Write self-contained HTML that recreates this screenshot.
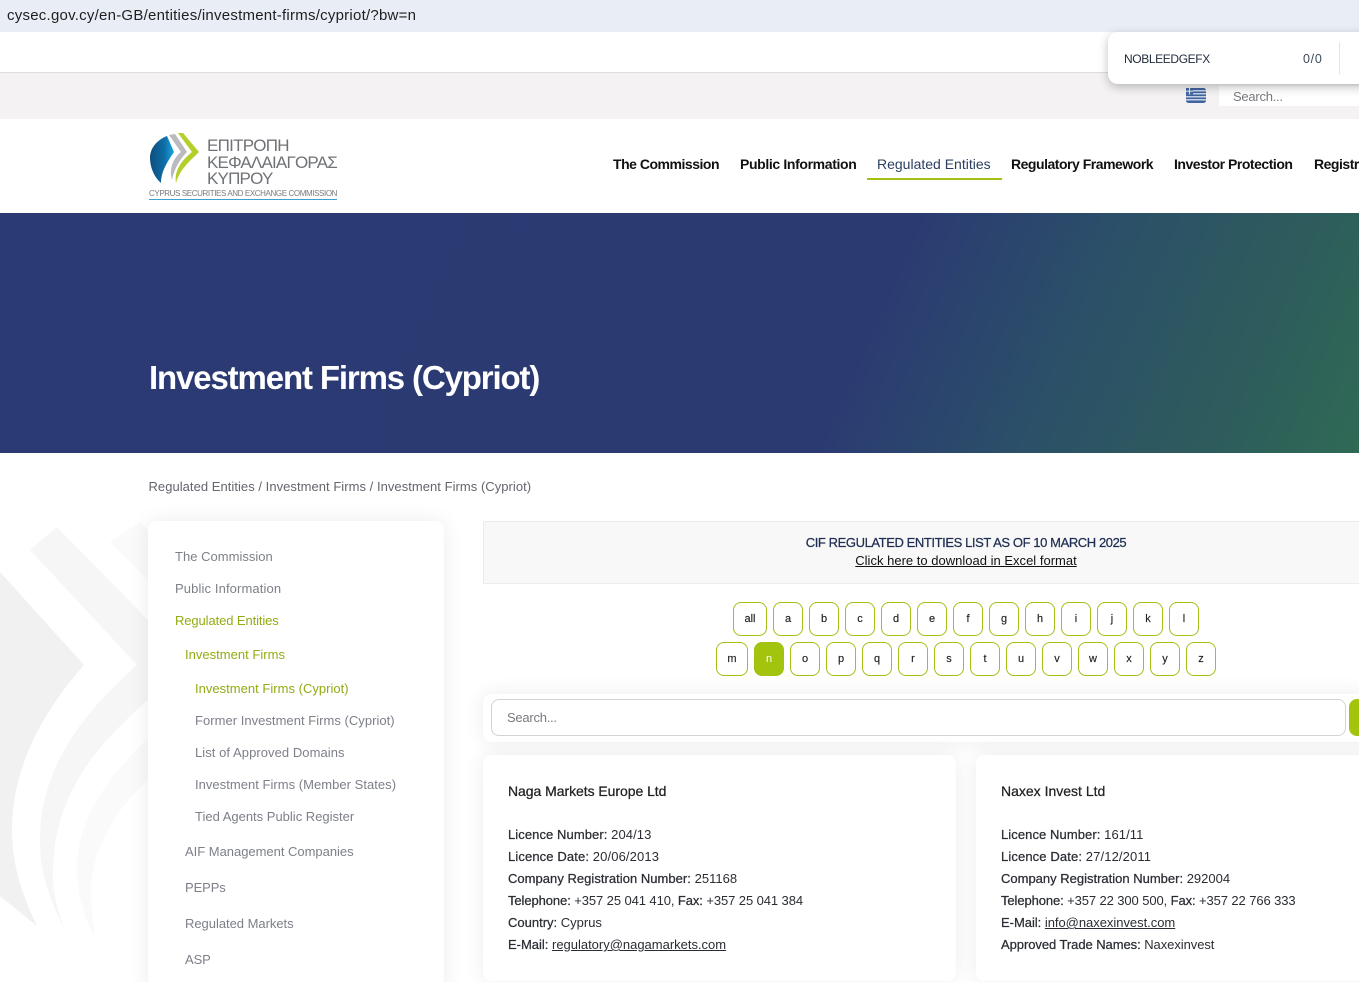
<!DOCTYPE html>
<html lang="en"><head><meta charset="utf-8"><title>Investment Firms (Cypriot)</title>
<style>
html,body{margin:0;padding:0;background:#fff}
#p{position:relative;width:1359px;height:982px;overflow:hidden;background:#fff;font-family:"Liberation Sans","Noto Sans CJK SC",sans-serif;color:#222}
#p div,#p a,#p svg{position:absolute}
.t{white-space:nowrap;line-height:16px;height:16px}
.s{font-size:13px;color:#7d8089;letter-spacing:.02px}
.g{color:#93ab12}
.n{font-size:14px;font-weight:bold;color:#111;letter-spacing:-.48px}
.c{font-size:13px;color:#2a2d33;letter-spacing:0}
.c b{font-weight:normal;-webkit-text-stroke:.25px #2a2d33}
.c u{text-decoration:underline}
.k{box-sizing:border-box;height:34px;width:30px;border:1px solid #a3c015;border-radius:8px;background:#fff;font-size:11px;line-height:32px;text-align:center;color:#222;-webkit-text-stroke:.15px #222}
.card{background:#fff;border-radius:8px;box-shadow:0 0 20px rgba(0,0,0,.08)}
</style></head><body><div id="p">
<div style="left:0;top:0;width:1359px;height:32px;background:#e9eef6"></div>
<div class="t" style="left:7px;top:8px;font-size:15px;color:#1f1f1f;letter-spacing:.24px">cysec.gov.cy/en-GB/entities/investment-firms/cypriot/?bw=n</div>
<div style="left:0;top:72px;width:1359px;height:47px;background:#f4f2f2;border-top:1px solid #dedcdc;box-sizing:border-box"></div>
<svg style="left:1186px;top:88px" width="20" height="15" viewBox="0 0 20 15"><rect width="20" height="15" rx="2.5" fill="#3f64a0"/><g fill="#e8edf5"><rect y="2.2" width="20" height="1.2"/><rect y="5.2" width="20" height="1.2"/><rect y="8.2" width="20" height="1.2"/><rect y="11.2" width="20" height="1.2"/></g><rect width="7" height="6.4" fill="#3f64a0"/><path d="M3.5 0v6.4M0 3.2h7" stroke="#dfe6f0" stroke-width="1.2"/></svg>
<div style="left:1219px;top:86px;width:140px;height:20px;background:#fff"></div>
<div class="t" style="left:1233px;top:89px;font-size:13px;color:#77797f;letter-spacing:-.25px">Search...</div>
<div style="left:1108px;top:32px;width:270px;height:52px;background:#fff;border-radius:10px;box-shadow:0 3px 10px rgba(0,0,0,.25)"></div>
<div class="t" style="left:1124px;top:51px;font-size:12px;color:#1f2a3a;letter-spacing:-.38px">NOBLEEDGEFX</div>
<div class="t" style="left:1303px;top:51px;font-size:12.5px;color:#3c4a5c;letter-spacing:.7px">0/0</div>
<div style="left:1339px;top:42px;width:1px;height:32px;background:#dfe4ec"></div>

<div style="left:0;top:119px;width:1359px;height:94px;background:#fff"></div>
<svg style="left:148px;top:131px" width="56" height="58" viewBox="0 0 56 58">
<defs><linearGradient id="lb" x1="0" y1="0" x2="1" y2="0"><stop offset="0" stop-color="#0f4d7c"/><stop offset=".6" stop-color="#0d6ea8"/><stop offset="1" stop-color="#1ea6e0"/></linearGradient></defs>
<path d="M19 5 L26 21 C20 30 13 40 13 52 C6 46 2 36 2 27 C2 17 9 9 19 5Z" fill="url(#lb)"/>
<path d="M21 4 L27 3 L39 21 C32 28 26 38 24 49 C21 40 24 28 33 21Z" fill="#b9bbbe"/>
<path d="M30 2 L35 2 L51 21 C42 30 32 38 28 52 C26 40 33 30 44 21Z" fill="#b4cf2a"/>
</svg>
<div class="t" style="left:207px;top:138px;font-size:17px;color:#6f7276;letter-spacing:-.75px">ΕΠΙΤΡΟΠΗ</div>
<div class="t" style="left:207px;top:155px;font-size:17px;color:#6f7276;letter-spacing:-.8px">ΚΕΦΑΛΑΙΑΓΟΡΑΣ</div>
<div class="t" style="left:207px;top:171px;font-size:17px;color:#6f7276;letter-spacing:-.8px">ΚΥΠΡΟΥ</div>
<div class="t" style="left:149px;top:186px;font-size:8px;color:#777a7e;letter-spacing:-.39px">CYPRUS SECURITIES AND EXCHANGE COMMISSION</div>
<div style="left:149px;top:199px;width:188px;height:1px;background:#3aa0d0"></div>

<div class="t n" style="left:613px;top:156px">The Commission</div>
<div class="t n" style="left:740px;top:156px;letter-spacing:-.36px">Public Information</div>
<div class="t n" style="left:877px;top:156px;font-weight:normal;color:#2a3f60;letter-spacing:0">Regulated Entities</div>
<div style="left:867px;top:178px;width:135px;height:2px;background:#a3c015"></div>
<div class="t n" style="left:1011px;top:156px">Regulatory Framework</div>
<div class="t n" style="left:1174px;top:156px">Investor Protection</div>
<div class="t n" style="left:1314px;top:156px">Registrar</div>

<div style="left:0;top:213px;width:1359px;height:240px;background:linear-gradient(114deg,#2b3a72 0%,#2b3b72 63%,#2b5068 77%,#2e5c5c 90%,#2f6a55 100%)"></div>
<div class="t" style="left:149px;top:358px;height:40px;line-height:40px;font-size:33px;font-weight:bold;color:#fff;letter-spacing:-1.14px">Investment Firms (Cypriot)</div>

<div class="t" style="left:148.5px;top:479px;font-size:13px;color:#63666d;letter-spacing:.04px">Regulated Entities / Investment Firms / Investment Firms (Cypriot)</div>

<svg style="left:0;top:510px" width="148" height="472" viewBox="0 0 148 472">
<path d="M0 62 L84 155 C40 205 12 260 12 320 C12 355 22 385 37 416 L0 386Z" fill="#f1f1f1"/>
<path d="M30 40 L57 17 L148 110 L148 190 C90 240 53 290 53 365 C53 385 58 400 64 418 C50 390 40 365 40 330 C40 260 80 205 137 155Z" fill="#f6f6f6"/>
<path d="M110 32 L140 12 L148 20 L148 70Z M148 228 C105 270 77 310 77 360 C77 385 85 410 95 428 C93 412 91 395 91 383 C91 340 115 300 148 270Z" fill="#fafafa"/>
</svg>

<div class="card" style="left:148px;top:521px;width:296px;height:480px"></div>
<div class="t s" style="left:175px;top:549px">The Commission</div>
<div class="t s" style="left:175px;top:581px;letter-spacing:.12px">Public Information</div>
<div class="t s g" style="left:175px;top:613px;letter-spacing:-.1px">Regulated Entities</div>
<div class="t s g" style="left:185px;top:647px">Investment Firms</div>
<div class="t s g" style="left:195px;top:681px">Investment Firms (Cypriot)</div>
<div class="t s" style="left:195px;top:713px;letter-spacing:.03px">Former Investment Firms (Cypriot)</div>
<div class="t s" style="left:195px;top:745px;letter-spacing:.06px">List of Approved Domains</div>
<div class="t s" style="left:195px;top:777px;letter-spacing:.03px">Investment Firms (Member States)</div>
<div class="t s" style="left:195px;top:809px;letter-spacing:0">Tied Agents Public Register</div>
<div class="t s" style="left:185px;top:844px;letter-spacing:-.02px">AIF Management Companies</div>
<div class="t s" style="left:185px;top:880px;letter-spacing:-.1px">PEPPs</div>
<div class="t s" style="left:185px;top:916px;letter-spacing:-.03px">Regulated Markets</div>
<div class="t s" style="left:185px;top:952px;letter-spacing:-.1px">ASP</div>

<div style="left:483px;top:521px;width:890px;height:63px;box-sizing:border-box;background:#f8f8f8;border:1px solid #ececec"></div>
<div class="t" style="left:483px;top:535px;width:966px;text-align:center;font-size:13px;color:#1f2f52;letter-spacing:-.41px;-webkit-text-stroke:.25px #1f2f52">CIF REGULATED ENTITIES LIST AS OF 10 MARCH 2025</div>
<div class="t" style="left:483px;top:553px;width:966px;text-align:center;font-size:13px;color:#111;letter-spacing:.01px;text-decoration:underline">Click here to download in Excel format</div>

<div class="k" style="left:733px;top:602px;width:34px">all</div>
<div class="k" style="left:773px;top:602px">a</div>
<div class="k" style="left:809px;top:602px">b</div>
<div class="k" style="left:845px;top:602px">c</div>
<div class="k" style="left:881px;top:602px">d</div>
<div class="k" style="left:917px;top:602px">e</div>
<div class="k" style="left:953px;top:602px">f</div>
<div class="k" style="left:989px;top:602px">g</div>
<div class="k" style="left:1025px;top:602px">h</div>
<div class="k" style="left:1061px;top:602px">i</div>
<div class="k" style="left:1097px;top:602px">j</div>
<div class="k" style="left:1133px;top:602px">k</div>
<div class="k" style="left:1169px;top:602px">l</div>
<div class="k" style="left:716px;top:642px;width:32px">m</div>
<div class="k" style="left:754px;top:642px;background:#a3c40c;color:#fff;-webkit-text-stroke:0">n</div>
<div class="k" style="left:790px;top:642px">o</div>
<div class="k" style="left:826px;top:642px">p</div>
<div class="k" style="left:862px;top:642px">q</div>
<div class="k" style="left:898px;top:642px">r</div>
<div class="k" style="left:934px;top:642px">s</div>
<div class="k" style="left:970px;top:642px">t</div>
<div class="k" style="left:1006px;top:642px">u</div>
<div class="k" style="left:1042px;top:642px">v</div>
<div class="k" style="left:1078px;top:642px">w</div>
<div class="k" style="left:1114px;top:642px">x</div>
<div class="k" style="left:1150px;top:642px">y</div>
<div class="k" style="left:1186px;top:642px">z</div>

<div class="card" style="left:483px;top:694px;width:890px;height:48px"></div>
<div style="left:491px;top:699px;width:855px;height:37px;box-sizing:border-box;border:1px solid #d3d3d3;border-radius:8px;background:#fff"></div>
<div class="t" style="left:507px;top:710px;font-size:13px;color:#777a7f;letter-spacing:-.25px">Search...</div>
<div style="left:1349px;top:699px;width:30px;height:37px;background:#a3c40c;border-radius:8px"></div>

<div class="card" style="left:483px;top:755px;width:473px;height:226px"></div>
<div class="t" style="left:508px;top:783px;font-size:14px;color:#222;letter-spacing:-.05px;-webkit-text-stroke:.25px #222">Naga Markets Europe Ltd</div>
<div class="t c" style="left:508px;top:827px;letter-spacing:.08px"><b>Licence Number:</b> 204/13</div>
<div class="t c" style="left:508px;top:849px;letter-spacing:.12px"><b>Licence Date:</b> 20/06/2013</div>
<div class="t c" style="left:508px;top:871px;letter-spacing:.03px"><b>Company Registration Number:</b> 251168</div>
<div class="t c" style="left:508px;top:893px;letter-spacing:-.09px"><b>Telephone:</b> +357 25 041 410, <b>Fax:</b> +357 25 041 384</div>
<div class="t c" style="left:508px;top:915px"><b>Country:</b> Cyprus</div>
<div class="t c" style="left:508px;top:937px;letter-spacing:-.01px"><b>E-Mail:</b> <u>regulatory@nagamarkets.com</u></div>

<div class="card" style="left:976px;top:755px;width:473px;height:226px"></div>
<div class="t" style="left:1001px;top:783px;font-size:14px;color:#222;-webkit-text-stroke:.25px #222">Naxex Invest Ltd</div>
<div class="t c" style="left:1001px;top:827px;letter-spacing:.08px"><b>Licence Number:</b> 161/11</div>
<div class="t c" style="left:1001px;top:849px;letter-spacing:.12px"><b>Licence Date:</b> 27/12/2011</div>
<div class="t c" style="left:1001px;top:871px"><b>Company Registration Number:</b> 292004</div>
<div class="t c" style="left:1001px;top:893px;letter-spacing:-.1px"><b>Telephone:</b> +357 22 300 500, <b>Fax:</b> +357 22 766 333</div>
<div class="t c" style="left:1001px;top:915px;letter-spacing:-.03px"><b>E-Mail:</b> <u>info@naxexinvest.com</u></div>
<div class="t c" style="left:1001px;top:937px;letter-spacing:-.06px"><b>Approved Trade Names:</b> Naxexinvest</div>
</div></body></html>
